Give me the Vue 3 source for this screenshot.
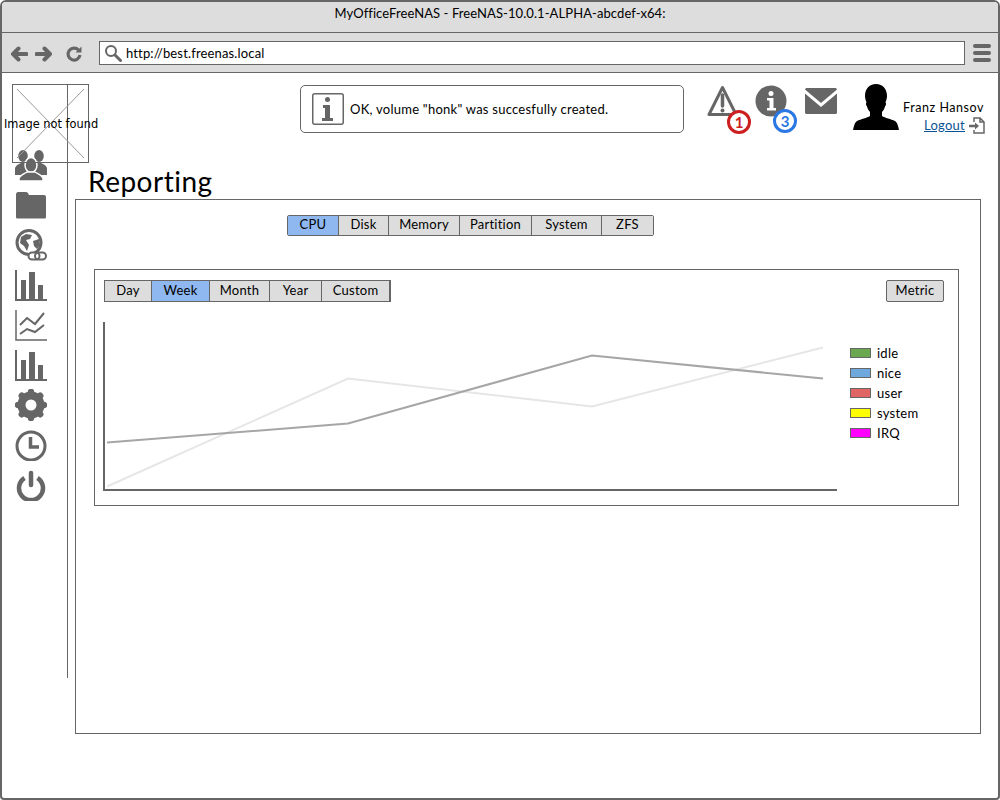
<script setup>
const tabs = [
  { label: 'CPU', active: true },
  { label: 'Disk' },
  { label: 'Memory' },
  { label: 'Partition' },
  { label: 'System' },
  { label: 'ZFS' },
]
const ranges = [
  { label: 'Day' },
  { label: 'Week', active: true },
  { label: 'Month' },
  { label: 'Year' },
  { label: 'Custom' },
]
const legend = [
  { label: 'idle', color: '#6aa84f' },
  { label: 'nice', color: '#6fa8dc' },
  { label: 'user', color: '#e06666' },
  { label: 'system', color: '#ffff00' },
  { label: 'IRQ', color: '#ff00ff' },
]
</script>

<template>
  <div class="frame">
    <div class="titlebar">MyOfficeFreeNAS - FreeNAS-10.0.1-ALPHA-abcdef-x64:</div>

    <div class="toolbar">
      <svg class="nav" width="18" height="18" viewBox="0 0 18 18"><path d="M8.500 3.500 3 9l5.500 5.500M3.500 9H16.500" fill="none" stroke="#666" stroke-width="4" stroke-linejoin="round" stroke-linecap="round"/></svg>
      <svg class="nav next" width="18" height="18" viewBox="0 0 18 18"><path d="M9.500 3.500 15 9l-5.500 5.500M14.500 9H1.500" fill="none" stroke="#666" stroke-width="4" stroke-linejoin="round" stroke-linecap="round"/></svg>
      <svg class="nav reload" width="18" height="18" viewBox="0 0 18 18"><path d="M13.500 5A6 6 0 1 0 15 10" fill="none" stroke="#666" stroke-width="3.200"/><path d="M10.500 7.500H16.500V1.500z" fill="#666"/></svg>
      <div class="url">
        <svg width="18" height="18" viewBox="0 0 18 18"><circle cx="7" cy="7" r="5" fill="none" stroke="#666" stroke-width="2"/><path d="M11 11l5.500 5.500" stroke="#666" stroke-width="3" stroke-linecap="round"/></svg>
        <span>http://best.freenas.local</span>
      </div>
      <div class="burger"><i></i><i></i><i></i></div>
    </div>

    <div class="page">
      <div class="logo">
        <svg width="77" height="79" viewBox="0 0 77 79"><path d="M5 5l67 69M72 5 5 74" stroke="#999" stroke-width="1" fill="none"/></svg>
        <span>Image not found</span>
      </div>

      <nav class="side">
        <svg width="32" height="32" viewBox="0 0 32 32" fill="#666"><ellipse cx="8" cy="7" rx="4.800" ry="6"/><ellipse cx="24" cy="7" rx="4.800" ry="6"/><path d="M0 19c1-3 4-4 6-5h4l12 0h4c2 1 5 2 6 5v7H0z"/><ellipse cx="16" cy="16" rx="6" ry="7.500" stroke="#fff" stroke-width="1.500"/><path d="M4 32v-3c1-3 5-4 8-6h8c3 2 7 3 8 6v3z" stroke="#fff" stroke-width="1.500"/></svg>
        <svg width="32" height="32" viewBox="0 0 32 32" fill="#666"><path d="M1 5.500C1 4 2 3 3 3h8c1.500 0 2 1 3 3h15c1.500 0 2 1 2 2v20c0 1-.5 1.500-2 1.500H3c-1.500 0-2-.5-2-1.500z"/></svg>
        <svg width="32" height="32" viewBox="0 0 32 32"><circle cx="14" cy="13.500" r="12" fill="#fff" stroke="#666" stroke-width="3"/><path d="M6 8l5-3 6 1-2 4-4 1 3 5-2 6-3-5-4-3zM18 12l6-2 1 6-3 4-3-3z" fill="#666"/><rect x="13.500" y="23.500" width="11" height="7" rx="3.500" fill="#fff" stroke="#666" stroke-width="2"/><rect x="20" y="23.500" width="11" height="7" rx="3.500" fill="none" stroke="#666" stroke-width="2"/></svg>
        <svg width="32" height="32" viewBox="0 0 32 32" fill="#666"><path d="M1 1v30h31" fill="none" stroke="#666" stroke-width="2"/><rect x="6" y="11" width="5" height="19"/><rect x="14" y="3" width="6" height="27"/><rect x="23" y="16" width="5" height="14"/></svg>
        <svg width="32" height="32" viewBox="0 0 32 32" fill="none" stroke="#666"><path d="M1 1v30h31" stroke-width="1.500"/><path d="M5 16l7-7 8 6 9-11M5 25l7-5 8 3 9-7" stroke-width="2"/></svg>
        <svg width="32" height="32" viewBox="0 0 32 32" fill="#666"><path d="M1 1v30h31" fill="none" stroke="#666" stroke-width="2"/><rect x="6" y="11" width="5" height="19"/><rect x="14" y="3" width="6" height="27"/><rect x="23" y="16" width="5" height="14"/></svg>
        <svg width="32" height="32" viewBox="0 0 32 32"><circle cx="16" cy="16" r="10" fill="none" stroke="#666" stroke-width="7"/><g stroke="#666" stroke-width="6.500" stroke-linecap="round"><path d="M16 3v26M3 16h26M6.800 6.800l18.400 18.400M25.200 6.800 6.800 25.200"/></g><circle cx="16" cy="16" r="5.500" fill="#fff"/></svg>
        <svg width="32" height="32" viewBox="0 0 32 32" fill="none" stroke="#666" stroke-width="3"><circle cx="16" cy="17" r="14"/><path d="M15.500 8v10H24" stroke-width="3.500"/></svg>
        <svg width="32" height="32" viewBox="0 0 32 32" fill="none" stroke="#666" stroke-width="4.500" stroke-linecap="round"><path d="M9.500 9a12 12 0 1 0 13 0" stroke-linecap="butt"/><path d="M16 4v12"/></svg>
      </nav>

      <main class="main">
        <header class="top">
          <div class="notice">
            <svg width="32" height="32" viewBox="0 0 32 32"><rect x=".75" y=".75" width="30.500" height="30.500" rx="2" fill="#fff" stroke="#666" stroke-width="1.500"/><circle cx="15.500" cy="6.500" r="2.500" fill="#666"/><path d="M11 12h7v13h3v3H10v-3h3V15h-2z" fill="#666"/></svg>
            <span>OK, volume "honk" was succesfully created.</span>
          </div>

          <div class="alert warn">
            <svg width="32" height="32" viewBox="0 0 32 32"><path d="M15.500 2.500 2 29.500h27z" fill="#fff" stroke="#666" stroke-width="3" stroke-linejoin="round"/><path d="M15.500 10v11" stroke="#666" stroke-width="3.500" stroke-linecap="round"/><circle cx="15.500" cy="25.500" r="2" fill="#666"/></svg>
            <b class="badge red">1</b>
          </div>
          <div class="alert info">
            <svg width="32" height="32" viewBox="0 0 32 32"><circle cx="16" cy="16" r="15.500" fill="#666"/><circle cx="16" cy="8.500" r="2.500" fill="#fff"/><path d="M12 13h6.500v10H21v2.500h-9V23h2.500v-7.500H12z" fill="#fff"/></svg>
            <b class="badge blue">3</b>
          </div>
          <svg class="mail" width="32" height="26" viewBox="0 0 32 26" fill="#666"><path d="M0 1.500 1 0h30l1 1.500L16 15z"/><path d="M0 5.500V25l1 1h30l1-1V5.500L16 19z"/></svg>
          <svg class="avatar" width="46" height="46" viewBox="0 0 46 46"><path d="M23 0c7 0 11 5 11 12 0 3-1 5-1.500 6.500 1 .5.500 3-.5 4-.5 2-1.500 4-3 5.500v4c3 2 9 3 13 5 2 1 3 4 4 9H0c1-5 2-8 4-9 4-2 10-3 13-5v-4c-1.500-1.500-2.500-3.500-3-5.500-1-1-1.500-3.500-.5-4C13 17 12 15 12 12 12 5 16 0 23 0z"/></svg>
          <div class="user">
            <span class="name">Franz Hansov</span>
            <div class="logout">
              <a>Logout</a>
              <svg width="16" height="17" viewBox="0 0 16 17" fill="none" stroke="#666" stroke-width="1.500"><path d="M5 5V1h6l4 4v11H5v-3M11 1v4h4"/><path d="M0 9h7" stroke-width="2.500"/><path d="M6 5.500 10 9l-4 3.500z" fill="#666" stroke="none"/></svg>
            </div>
          </div>
        </header>

        <h1>Reporting</h1>

        <section class="panel">
          <div class="tabs">
            <div v-for="t in tabs" :key="t.label" class="seg" :class="{ on: t.active }">{{ t.label }}</div>
          </div>

          <div class="card">
            <div class="card-head">
              <div class="ranges">
                <div v-for="r in ranges" :key="r.label" class="seg" :class="{ on: r.active }">{{ r.label }}</div>
              </div>
              <div class="metric">Metric</div>
            </div>
            <div class="chart-row">
              <svg class="chart" width="734" height="170" viewBox="0 0 734 170">
                <path d="M1 0V168H734" fill="none" stroke="#666" stroke-width="2"/>
                <path d="M4 164.500 245 56.500 489 84.500 720 25.500" fill="none" stroke="#e6e6e6" stroke-width="2"/>
                <path d="M4 120.500 245 101.500 489 33.500 720 56.500" fill="none" stroke="#a6a6a6" stroke-width="2"/>
              </svg>
              <ul class="legend">
                <li v-for="l in legend" :key="l.label">
                  <i :style="{ background: l.color }"></i>{{ l.label }}
                </li>
              </ul>
            </div>
          </div>
        </section>
      </main>
    </div>
  </div>
</template>

<style>
html, body { margin: 0; height: 800px; overflow: hidden; background: #fff; }
</style>

<style scoped>
.frame {
  box-sizing: border-box;
  width: 1000px;
  height: 800px;
  border: 2px solid #666;
  border-radius: 6px 6px 4px 4px;
  overflow: hidden;
  position: relative;
  font-family: "Lato", "Noto Sans", sans-serif;
  font-size: 13px;
  color: #000;
  letter-spacing: .25px;
}
.titlebar {
  height: 30px;
  line-height: 23px;
  background: #ddd;
  border-bottom: 1px solid #666;
  text-align: center;
  letter-spacing: .08px;
}
.toolbar {
  height: 39px;
  background: #ddd;
  border-bottom: 1px solid #666;
  display: flex;
  align-items: center;
  padding-left: 8px;
}
.nav { flex: none; margin-top: 2px; }
.next { margin-left: 7px; }
.reload { margin-left: 12px; }
.url {
  box-sizing: border-box;
  margin-left: 16px;
  width: 866px;
  height: 24px;
  background: #fff;
  border: 1px solid #666;
  display: flex;
  align-items: center;
  gap: 4px;
  padding-left: 4px;
  letter-spacing: .15px;
}
.burger { margin-left: 8px; display: flex; flex-direction: column; gap: 3px; }
.burger i { display: block; width: 18px; height: 4px; background: #666; border-radius: 2px; }

.page { display: flex; height: 725px; position: relative; }
.logo {
  position: absolute;
  left: 10px;
  top: 11px;
  z-index: 2;
  box-sizing: border-box;
  width: 77px;
  height: 79px;
  border: 1px solid #666;
}
.logo svg { position: absolute; left: -1px; top: -1px; }
.logo span {
  position: absolute;
  left: -9px;
  top: 32px;
  white-space: nowrap;
  font: 11.400px "DejaVu Sans", sans-serif;
  letter-spacing: 0;
}
.side {
  box-sizing: border-box;
  flex: none;
  width: 66px;
  height: 594px;
  margin-top: 11px;
  border-right: 1px solid #666;
  padding: 65px 0 0 13px;
  display: flex;
  flex-direction: column;
  gap: 8px;
}
.side svg { display: block; }

.main { flex: 1; padding-top: 12px; }
.top { display: flex; height: 48px; position: relative; }
.notice {
  box-sizing: border-box;
  margin-left: 232px;
  width: 384px;
  height: 48px;
  border: 1px solid #666;
  border-radius: 5px;
  display: flex;
  align-items: center;
  gap: 6px;
  padding-left: 11px;
}
.alert { position: relative; width: 32px; height: 32px; flex: none; }
.warn { margin-left: 23px; }
.info { margin-left: 16px; }
.badge {
  position: absolute;
  box-sizing: border-box;
  width: 24px;
  height: 24px;
  border-radius: 50%;
  background: #fff;
  border: 3px solid;
  font-size: 15px;
  font-weight: 700;
  line-height: 18px;
  text-align: center;
  letter-spacing: 0;
}
.red { left: 20px; top: 25px; color: #cc1f1f; }
.blue { left: 18px; top: 24px; color: #2b78e4; }
.mail { margin: 3px 0 0 18px; flex: none; }
.avatar { margin: -1px 0 0 16px; flex: none; }
.user { margin-left: 4px; width: 81px; padding-top: 14px; text-align: right; line-height: 17px; white-space: nowrap; }
.name { display: block; font-size: 12.500px; letter-spacing: .55px; }
.logout { display: flex; justify-content: flex-end; align-items: flex-start; gap: 4px; margin: 1px -1px 0 0; }
.logout a { color: #0b5394; text-decoration: underline; }

h1 {
  margin: 31px 0 0 20px;
  height: 35px;
  font-size: 28px;
  line-height: 34px;
  font-weight: 400;
  letter-spacing: .5px;
}
.panel {
  box-sizing: border-box;
  margin-left: 7px;
  width: 906px;
  height: 535px;
  border: 1px solid #666;
  padding: 15px 18px 0;
}
.tabs {
  display: grid;
  grid-template-columns: 50px 50px 71px 72px 70px 52px;
  width: 367px;
  height: 21px;
  margin-left: 193px;
  border: 1px solid #666;
  box-sizing: border-box;
  border-radius: 2px;
}
.seg {
  background: #ddd;
  text-align: center;
  line-height: 17px;
  border-left: 1px solid #666;
  min-width: 0;
}
.seg:first-child { border-left: 0; }
.seg.on { background: #8fb8f0; }
.card {
  box-sizing: border-box;
  margin-top: 33px;
  width: 865px;
  height: 237px;
  border: 1px solid #666;
  padding: 10px 14px 0 9px;
}
.card-head { display: flex; justify-content: space-between; height: 22px; }
.ranges {
  box-sizing: border-box;
  display: grid;
  grid-template-columns: 46px 58px 60px 52px 68px;
  width: 287px;
  height: 22px;
  border: 1px solid #666;
  border-right-width: 2px;
}
.ranges .seg { line-height: 19px; }
.metric {
  box-sizing: border-box;
  width: 58px;
  height: 22px;
  border: 1px solid #666;
  border-radius: 2px;
  background: #ddd;
  text-align: center;
  line-height: 19px;
}
.chart-row { display: flex; margin-top: 20px; }
.chart { flex: none; display: block; margin-left: -1px; }
.legend {
  list-style: none;
  margin: 23px 0 0 13px;
  padding: 0;
  display: flex;
  flex-direction: column;
  gap: 4px;
}
.legend li { display: flex; align-items: center; gap: 6px; height: 16px; }
.legend i {
  box-sizing: border-box;
  width: 21px;
  height: 10px;
  border: 1px solid #666;
}
</style>
